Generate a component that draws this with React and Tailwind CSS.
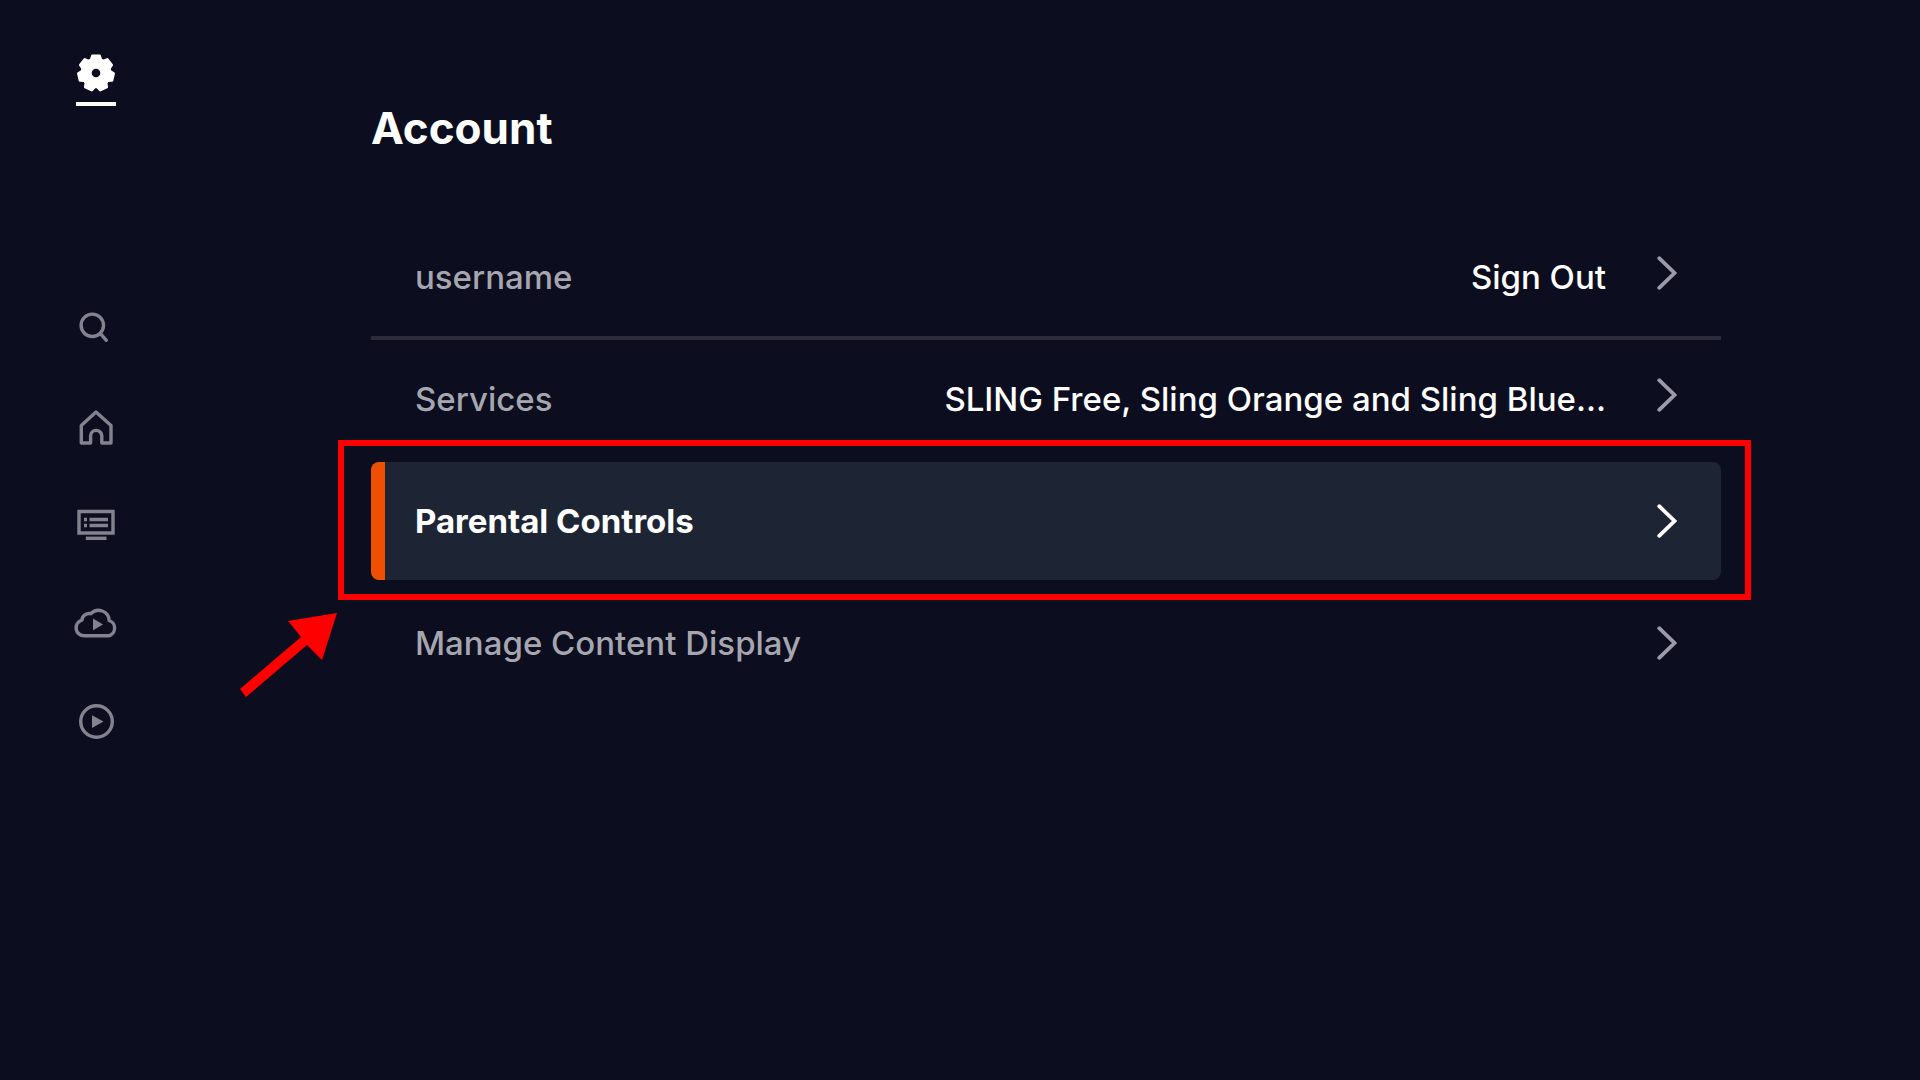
import { useState } from 'react'
import clsx from 'clsx'

const TEETH = [0, 1, 2, 3, 4, 5, 6]

function GearIcon() {
  return (
    <svg viewBox="0 0 48 48" className="size-12" fill="currentColor" aria-hidden="true">
      <mask id="gear-hole">
        <rect width="48" height="48" fill="white" />
        <circle cx="24" cy="24" r="4.3" fill="black" />
      </mask>
      <g mask="url(#gear-hole)">
        <circle cx="24" cy="24" r="15.3" />
        {TEETH.map((n) => (
          <path
            key={n}
            d="M16.5 12 L18 10.2 L19.1 6.4 Q19.4 5.4 20.4 5.4 H27.6 Q28.6 5.4 28.9 6.4 L30 10.2 L31.5 12 L24 24 Z"
            transform={`rotate(${(n * 360) / 7} 24 24)`}
          />
        ))}
      </g>
    </svg>
  )
}

function SearchIcon() {
  return (
    <svg viewBox="0 0 48 48" className="size-12" fill="none" stroke="currentColor" strokeWidth="3.4" strokeLinecap="round" aria-hidden="true">
      <circle cx="20.3" cy="20.3" r="11.2" />
      <path d="M28.3 28.3 L34.3 35.3" />
    </svg>
  )
}

function HomeIcon() {
  return (
    <svg viewBox="0 0 48 48" className="size-12" fill="none" stroke="currentColor" strokeWidth="3.4" strokeLinejoin="round" aria-hidden="true">
      <path d="M24 9 L9.3 22.5 V40 H18.6 V33 a5.6 5.6 0 0 1 11.2 0 V40 H39 V22.5 Z" />
    </svg>
  )
}

function GuideIcon() {
  return (
    <svg viewBox="0 0 48 48" className="size-12" fill="none" stroke="currentColor" strokeWidth="3.4" aria-hidden="true">
      <path d="M7 10.5 H41 V32 H7 Z" />
      <path d="M13.8 37.3 H34.5" />
      <path d="M12 18.5 H15 M17.5 18.5 H36 M12 24.5 H15 M17.5 24.5 H36" />
    </svg>
  )
}

function CloudIcon() {
  return (
    <svg viewBox="0 0 48 48" className="size-12" fill="none" stroke="currentColor" strokeWidth="3.4" strokeLinejoin="round" aria-hidden="true">
      <path d="M12.2 36.8 a8 8 0 0 1 -2.3 -15.7 a7.2 7.2 0 0 1 9 -6.4 a10.5 10.5 0 0 1 18.2 6.8 a7.9 7.9 0 0 1 -0.9 15.3 Z" />
      <path d="M21 19.5 V31.3 L31 25.4 Z" fill="currentColor" stroke="none" />
    </svg>
  )
}

function PlayIcon() {
  return (
    <svg viewBox="0 0 48 48" className="size-12" fill="none" stroke="currentColor" strokeWidth="3.4" aria-hidden="true">
      <circle cx="24.5" cy="24.5" r="15.8" />
      <path d="M20 18.3 V31 L31.5 24.6 Z" fill="currentColor" stroke="none" />
    </svg>
  )
}

function Chevron({ className }) {
  return (
    <svg viewBox="0 0 20 34" className={clsx('h-[34px] w-5 shrink-0', className)} fill="none" stroke="currentColor" strokeWidth="3.8" strokeLinecap="round" aria-hidden="true">
      <path d="M2.2 2.2 L17.5 17 L2.2 31.8" />
    </svg>
  )
}

// Red frame and arrow that point out one row of the list
function Callout() {
  return (
    <>
      <span className="pointer-events-none absolute -top-[22px] -right-[30px] -bottom-5 -left-[33px] border-6 border-[#ff0000]" />
      <svg viewBox="0 0 98 85" className="pointer-events-none absolute top-[151px] -left-[131px] h-[85px] w-[98px]" fill="#ff0000" aria-hidden="true">
        <path d="M97 0 L82 47 L67 32 L6 84 L0 76 L61 24 L48 8 Z" />
      </svg>
    </>
  )
}

const navItems = [
  { label: 'Search', Icon: SearchIcon },
  { label: 'Home', Icon: HomeIcon },
  { label: 'Guide', Icon: GuideIcon },
  { label: 'Cloud DVR', Icon: CloudIcon },
  { label: 'On Demand', Icon: PlayIcon },
]

const rows = [
  { id: 'user', label: 'username', value: 'Sign Out', divider: true },
  { id: 'services', label: 'Services', value: 'SLING Free, Sling Orange and Sling Blue...' },
  { id: 'parental', label: 'Parental Controls', callout: true },
  { id: 'content', label: 'Manage Content Display' },
]

function Row({ row, active, onSelect }) {
  return (
    <li className={clsx('relative border-b-4', row.divider ? 'border-[#2b2b3a]' : 'border-transparent')}>
      <button
        type="button"
        onClick={onSelect}
        className={clsx(
          'relative flex h-[118px] w-full items-center overflow-hidden rounded-lg px-11 text-left text-[33px] leading-10',
          active ? 'bg-[#1d2535] font-bold text-white' : 'font-medium text-[#a6a6b0]'
        )}
      >
        {active && <span className="absolute inset-y-0 left-0 w-3.5 bg-[#ee4f00]" />}
        <span className="flex-1">{row.label}</span>
        {row.value && <span className="mr-[51px] text-white">{row.value}</span>}
        <Chevron className={clsx(row.value && 'mb-2', !active && 'text-[#9a9aa8]')} />
      </button>
      {row.callout && <Callout />}
    </li>
  )
}

export default function App() {
  const [selected, setSelected] = useState('parental')

  return (
    <div className="flex min-h-screen bg-[#0c0d1e] font-['Inter',sans-serif] text-white">
      <nav className="w-[371px] shrink-0 pt-[49px] pl-[72px]">
        <button type="button" aria-label="Settings" className="flex w-12 flex-col items-center gap-[5px]">
          <GearIcon />
          <span className="h-1 w-10 bg-white" />
        </button>
        <ul className="mt-[174px] text-[#83838f]">
          {navItems.map(({ label, Icon }) => (
            <li key={label}>
              <button type="button" aria-label={label} className="flex h-[98px] w-12 items-center">
                <Icon />
              </button>
            </li>
          ))}
        </ul>
      </nav>

      <main className="min-w-0 flex-1 pt-[100px] pr-[199px]">
        <h1 className="text-[44px] leading-[56px] font-bold">Account</h1>
        <ul className="mt-[62px]">
          {rows.map((row) => (
            <Row key={row.id} row={row} active={row.id === selected} onSelect={() => setSelected(row.id)} />
          ))}
        </ul>
      </main>
    </div>
  )
}
